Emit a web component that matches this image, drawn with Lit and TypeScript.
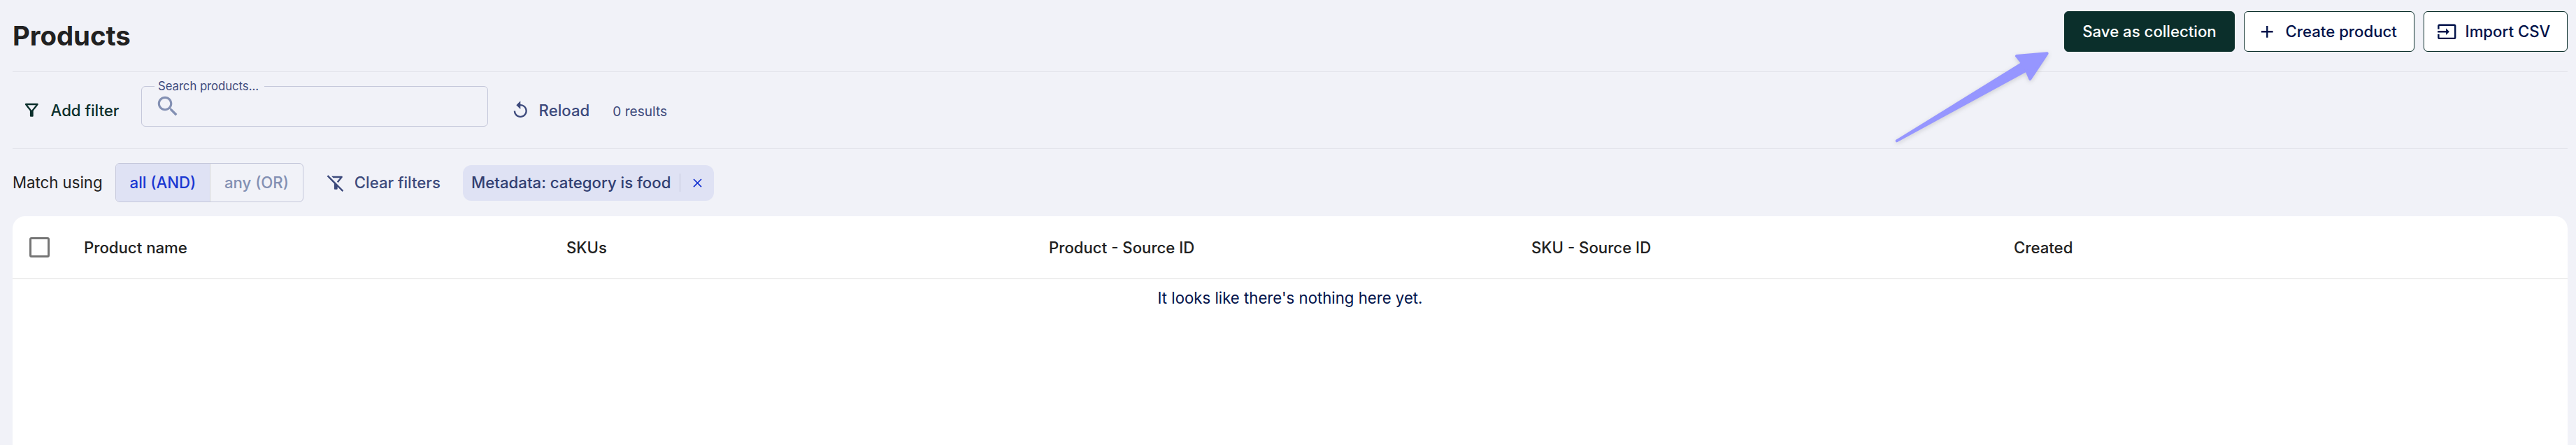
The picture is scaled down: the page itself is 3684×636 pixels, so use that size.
import {html, css, svg, LitElement} from 'lit';
import {customElement, property, state} from 'lit/decorators.js';
import {classMap} from 'lit/directives/class-map.js';

const ICONS = {
  add: 'M19 13h-6v6h-2v-6H5v-2h6V5h2v6h6v2z',
  input: 'M21 3.01H3c-1.1 0-2 .9-2 2V9h2V4.99h18v14.03H3V15H1v4.01c0 1.1.9 1.98 2 1.98h18c1.1 0 2-.88 2-1.98v-14c0-1.11-.9-2-2-2zM11 16l4-4-4-4v3H1v2h10v3z',
  filter: 'M7 6h10l-5.01 6.3L7 6zm-2.75-.39C6.27 8.2 10 13 10 13v6c0 .55.45 1 1 1h2c.55 0 1-.45 1-1v-6s3.72-4.8 5.74-7.39c.51-.66.04-1.61-.79-1.61H5.04c-.83 0-1.3.95-.79 1.61z',
  filterOff: 'M16.95 6l-3.57 4.55 1.43 1.43c1.03-1.31 4.98-6.37 4.98-6.37C20.3 4.95 19.83 4 19 4H6.83l2 2h8.12zM2.81 2.81L1.39 4.22 10 13v6c0 .55.45 1 1 1h2c.55 0 1-.45 1-1v-2.17l5.78 5.78 1.41-1.41L2.81 2.81z',
  replay: 'M12 5V1L7 6l5 5V7c3.31 0 6 2.69 6 6s-2.69 6-6 6-6-2.69-6-6H4c0 4.42 3.58 8 8 8s8-3.58 8-8-3.58-8-8-8z',
  search: 'M15.5 14h-.79l-.28-.27C15.41 12.59 16 11.11 16 9.5 16 5.91 13.09 3 9.5 3S3 5.91 3 9.5 5.91 16 9.5 16c1.61 0 3.09-.59 4.23-1.57l.27.28v.79l5 4.99L20.49 19l-4.99-5zm-6 0C7.01 14 5 11.99 5 9.5S7.01 5 9.5 5 14 7.01 14 9.5 11.99 14 9.5 14z',
  close: 'M19 6.41L17.59 5 12 10.59 6.41 5 5 6.41 10.59 12 5 17.59 6.41 19 12 13.41 17.59 19 19 17.59 13.41 12z',
};

@customElement('app-icon')
export class AppIcon extends LitElement {
  @property({ type: String })
  name: keyof typeof ICONS = 'add';

  static styles = css`
    :host {
      display: block;
      flex: none;
      width: 28.6px;
      height: 28.6px;
    }

    svg {
      display: block;
      width: 100%;
      height: 100%;
      fill: currentColor;
    }
  `

  render() {
    return html`<svg viewBox="0 0 24 24">${svg`<path d=${ICONS[this.name]} />`}</svg>`;
  }
}

@customElement('app-root')
export class AppRoot extends LitElement {
  /**
   * How the active filters are combined.
   */
  @state()
  protected _match: string = 'and';

  /**
   * Filters shown as chips.
   */
  @state()
  protected _filters: string[] = ['Metadata: category is food'];

  protected _columns = ['Product name', 'SKUs', 'Product - Source ID', 'SKU - Source ID', 'Created'];

  static styles = css`
    :host {
      display: flex;
      flex-direction: column;
      position: relative;
      box-sizing: border-box;
      height: 100vh;
      padding: 0 12px 0 18px;
      overflow: hidden;
      background: #f1f2f8;
      color: #212121;
      font: 400 22.2px/28px 'Inter', sans-serif;
    }

    * {
      box-sizing: border-box;
    }

    button {
      display: flex;
      align-items: center;
      margin: 0;
      padding: 0;
      border: none;
      background: none;
      color: inherit;
      font: inherit;
      font-weight: 500;
      white-space: nowrap;
      cursor: pointer;
    }

    .header {
      display: flex;
      justify-content: space-between;
      flex: none;
      height: 103px;
      border-bottom: 1px solid #e2e3ea;
    }

    h1 {
      margin: 27px 0 0;
      font-size: 38.3px;
      line-height: 48px;
      font-weight: 700;
    }

    .actions {
      display: flex;
      gap: 13px;
      margin-top: 16px;
      height: 58px;
    }

    .button {
      gap: 12.5px;
      padding: 0 17px 0 17.5px;
      border: 1px solid #0b2f2b;
      border-radius: 6px;
      background: #fff;
      color: #00124a;
    }

    .button.primary {
      padding: 0 25.3px;
      background: #0b2f2b;
      color: #fff;
    }

    .button.create {
      width: 244px;
    }

    .button.import {
      width: 206px;
    }

    .toolbar {
      display: flex;
      align-items: center;
      flex: none;
      height: 110px;
      padding-left: 13px;
      border-bottom: 1px solid #e2e3ea;
    }

    .text-button {
      gap: 12px;
      color: #3d4a7c;
    }

    .add-filter {
      gap: 13px;
      width: 171px;
      color: #0b2f2b;
    }

    .search {
      position: relative;
      display: flex;
      align-items: center;
      width: 496px;
      height: 58px;
      margin: 0 32px 12px 0;
      padding-left: 18px;
      border: 1px solid #c4c7da;
      border-radius: 6px;
      color: #8390b3;
    }

    .search app-icon {
      width: 38px;
      height: 38px;
    }

    .search input {
      flex: 1;
      min-width: 0;
      border: none;
      outline: none;
      background: none;
      font: inherit;
    }

    .search label {
      position: absolute;
      top: -11px;
      left: 18px;
      padding: 0 8px 0 5px;
      background: #f1f2f8;
      color: #3d4a7c;
      font-size: 16.65px;
      line-height: 20px;
    }

    .count {
      margin: 2px 0 0 33px;
      color: #3d4a7c;
      font-size: 19.1px;
    }

    .filters {
      display: flex;
      align-items: center;
      flex: none;
      height: 96px;
    }

    .toggle {
      display: flex;
      width: 269px;
      height: 56px;
      margin-left: 18.4px;
      border: 1px solid #c4c7da;
      border-radius: 6px;
      overflow: hidden;
    }

    .toggle button {
      justify-content: center;
      flex: 1;
      color: #8390b3;
    }

    .toggle button:first-child {
      flex: none;
      width: 135px;
      border-right: 1px solid #d6d6d8;
    }

    .toggle .selected {
      background: #dfe2f4;
      color: #1a37d2;
    }

    .clear {
      margin: 0 32.6px 0 32.3px;
    }

    .chip {
      display: flex;
      align-items: center;
      height: 51px;
      padding-left: 11.6px;
      border-radius: 12px;
      background: #dfe2f4;
      color: #323f72;
      font-weight: 500;
    }

    .chip button {
      height: 26px;
      margin-left: 13px;
      padding: 0 13.5px;
      border-left: 1px solid #c4c7da;
      color: #1a37d2;
    }

    .chip app-icon {
      width: 21px;
      height: 21px;
    }

    .card {
      flex: 1;
      border-radius: 18px 18px 0 0;
      background: #fff;
    }

    .row {
      display: grid;
      grid-template-columns: 78px repeat(5, 690px);
      align-items: center;
      height: 90px;
      padding-left: 24px;
      border-bottom: 1px solid #e0e0e0;
      font-weight: 500;
    }

    .checkbox {
      width: 29px;
      height: 29px;
      border: 3px solid #757575;
      border-radius: 3px;
    }

    .empty {
      padding-top: 13px;
      color: #00124a;
      text-align: center;
    }

    .arrow {
      position: absolute;
      top: 60px;
      right: 734px;
      width: 250px;
      height: 160px;
      fill: #9696ff;
      stroke: #9696ff;
      stroke-width: 12;
      stroke-linejoin: round;
      filter: drop-shadow(0 2px 3px rgba(0, 0, 0, 0.15));
      pointer-events: none;
    }
  `

  render() {
    return html`
      <div class="header">
        <h1>Products</h1>
        <div class="actions">
          <button class="button primary">Save as collection</button>
          <button class="button create"><app-icon name="add"></app-icon>Create product</button>
          <button class="button import"><app-icon name="input"></app-icon>Import CSV</button>
        </div>
      </div>
      <div class="toolbar">
        <button class="text-button add-filter"><app-icon name="filter"></app-icon>Add filter</button>
        <div class="search">
          <label for="search">Search products...</label>
          <app-icon name="search"></app-icon>
          <input id="search" type="text" />
        </div>
        <button class="text-button"><app-icon name="replay"></app-icon>Reload</button>
        <span class="count">0 results</span>
      </div>
      <div class="filters">
        <span>Match using</span>
        <div class="toggle">
          ${this._renderToggle('and', 'all (AND)')}
          ${this._renderToggle('or', 'any (OR)')}
        </div>
        <button class="text-button clear" @click=${this._clear}><app-icon name="filterOff"></app-icon>Clear filters</button>
        ${this._filters.map((filter) => html`
          <div class="chip">
            ${filter}
            <button aria-label="Remove" @click=${() => this._remove(filter)}><app-icon name="close"></app-icon></button>
          </div>
        `)}
      </div>
      <div class="card">
        <div class="row">
          <div class="checkbox"></div>
          ${this._columns.map((column) => html`<div>${column}</div>`)}
        </div>
        <div class="empty">It looks like there's nothing here yet.</div>
      </div>
      <svg class="arrow" viewBox="60 180 750 480">
        <path d="M98 604L637 271.5L612 240L743 229L670 339L654 301.6Z" />
      </svg>
    `;
  }

  protected _renderToggle(value: string, label: string) {
    return html`
      <button class=${classMap({ selected: this._match === value })} @click=${() => { this._match = value; }}>${label}</button>
    `;
  }

  protected _clear() {
    this._filters = [];
  }

  protected _remove(filter: string) {
    this._filters = this._filters.filter((f) => f !== filter);
  }
}
